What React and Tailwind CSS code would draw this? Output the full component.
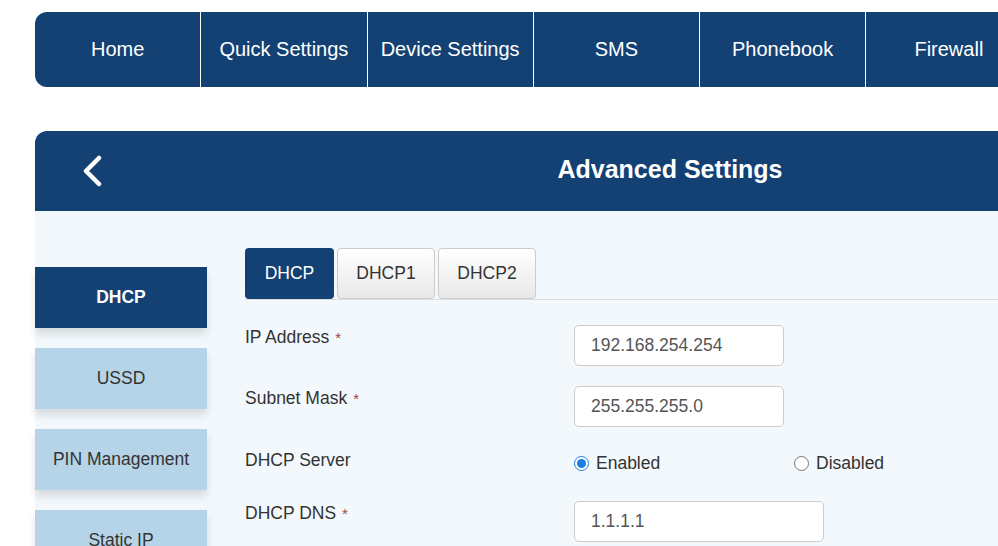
// Router admin: Advanced Settings / DHCP page

const navItems = ['Home', 'Quick Settings', 'Device Settings', 'SMS', 'Phonebook', 'Firewall', 'Settings'];
const sideItems = ['DHCP', 'USSD', 'PIN Management', 'Static IP'];

const Req = () => <span className="text-[#a0473a] ml-[6px] text-[15px]">*</span>;

const Field = ({ value, width }) => (
    <input
        readOnly
        value={value}
        className={`${width} h-[41px] rounded-[5px] border border-[#cccccc] bg-white pl-[16px] text-[17.5px] text-[#555] outline-none`}
    />
);

const Row = ({ label, required, children, height }) => (
    <div className={`flex items-start ${height}`}>
        <div className="w-[329px] pt-[3px] text-[17.5px] leading-[18px] text-[#333]">
            {label}
            {required && <Req />}
        </div>
        {children}
    </div>
);

export default function App() {
    return (
        <div className="w-[998px] h-[546px] overflow-hidden bg-white font-['Liberation_Sans',Arial,sans-serif]">
            <div className="ml-[35px] w-[1270px]">
                {/* Top navigation */}
                <div className="mt-[12px] h-[75px] flex rounded-l-[12px] bg-[#134174] overflow-hidden">
                    {navItems.map((item) => (
                        <div
                            key={item}
                            className="w-[166.25px] shrink-0 border-r border-white flex items-center justify-center text-white text-[20px] pb-[1px]"
                        >
                            {item}
                        </div>
                    ))}
                </div>

                {/* Panel header */}
                <div className="mt-[44px] h-[80px] flex items-center rounded-tl-[12px] bg-[#134174] relative">
                    <div className="pl-[46px]">
                        <svg width="22" height="32" viewBox="0 0 22 32" fill="none">
                            <polyline points="18,3 5,16 18,29" stroke="white" strokeWidth="4.5" strokeLinecap="round" strokeLinejoin="round" />
                        </svg>
                    </div>
                    <div className="absolute left-0 right-0 text-center text-white font-bold text-[25px] pb-[2px] pointer-events-none">
                        Advanced Settings
                    </div>
                </div>

                {/* Panel body */}
                <div className="bg-[#f2f8fb] flex h-[400px]">
                    <div className="w-[172px] pt-[56px] flex flex-col gap-[20px]">
                        {sideItems.map((item, i) => (
                            <div
                                key={item}
                                className={`h-[61px] flex items-center justify-center text-[17.5px] shadow-[0_6px_8px_rgba(0,0,0,0.12)] ${
                                    i === 0 ? 'bg-[#134174] text-white font-bold' : 'bg-[#b6d4e7] text-[#333]'
                                }`}
                            >
                                {item}
                            </div>
                        ))}
                    </div>

                    <div className="ml-[38px] pt-[37px] flex-1">
                        {/* Tabs */}
                        <div className="flex items-end gap-[3px] border-b border-[#dddddd] h-[52px]">
                            <div className="w-[89px] h-[51px] rounded-[4px] bg-[#134174] text-white text-[17.5px] flex items-center justify-center">
                                DHCP
                            </div>
                            <div className="w-[98px] h-[51px] rounded-[4px] border border-[#cccccc] bg-gradient-to-b from-white to-[#e8e8e8] text-[#333] text-[17.5px] flex items-center justify-center">
                                DHCP1
                            </div>
                            <div className="w-[98px] h-[51px] rounded-[4px] border border-[#cccccc] bg-gradient-to-b from-white to-[#e8e8e8] text-[#333] text-[17.5px] flex items-center justify-center">
                                DHCP2
                            </div>
                        </div>

                        {/* Form */}
                        <div className="mt-[25px] flex flex-col gap-[20px]">
                            <Row label="IP Address" required height="h-[41px]">
                                <Field value="192.168.254.254" width="w-[210px]" />
                            </Row>
                            <Row label="Subnet Mask" required height="h-[42px]">
                                <Field value="255.255.255.0" width="w-[210px]" />
                            </Row>
                            <Row label="DHCP Server" height="h-[33px]">
                                <div className="mt-[2px] flex items-center text-[17.5px] text-[#333]">
                                    <label className="w-[220px] flex items-center">
                                        <input type="radio" name="dhcp" defaultChecked className="w-[15px] h-[15px] m-0 accent-[#1a7ee0]" />
                                        <span className="ml-[7px]">Enabled</span>
                                    </label>
                                    <label className="flex items-center">
                                        <input type="radio" name="dhcp" className="w-[15px] h-[15px] m-0" />
                                        <span className="ml-[7px]">Disabled</span>
                                    </label>
                                </div>
                            </Row>
                            <Row label="DHCP DNS" required height="h-[41px]">
                                <Field value="1.1.1.1" width="w-[250px]" />
                            </Row>
                        </div>
                    </div>
                </div>
            </div>
        </div>
    );
}
